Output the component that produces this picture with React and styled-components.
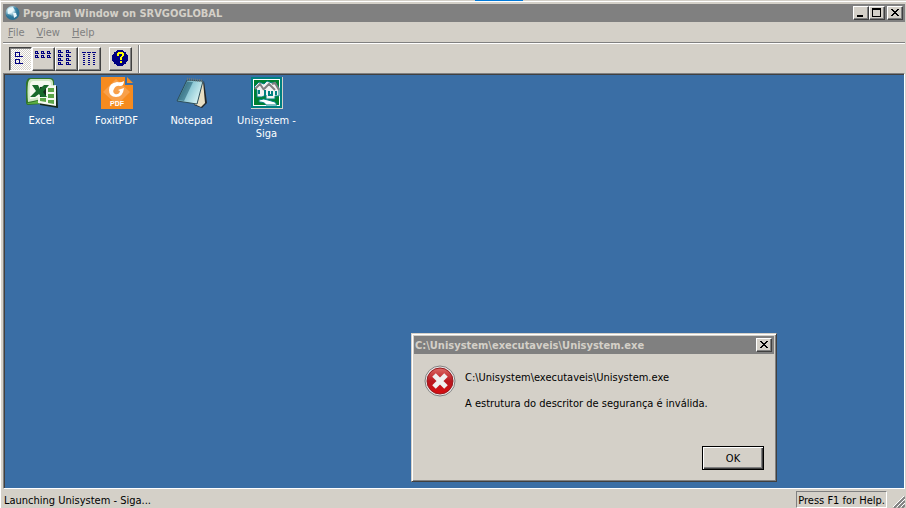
import React from "react";
import styled, { createGlobalStyle, css } from "styled-components";

const Global = createGlobalStyle`
  * { box-sizing: border-box; }
  html, body { margin: 0; background: #d4d0c8; }
  body, button { font: 11px/13px Tahoma, "DejaVu Sans Condensed", "DejaVu Sans", sans-serif; }
`;

const raised = css`
  border: 1px solid;
  border-color: #fff #404040 #404040 #fff;
  box-shadow: inset -1px -1px 0 #808080;
`;

const Window = styled.main`
  min-height: 100vh;
  display: flex;
  flex-direction: column;
  padding: 3px 1px 0 2px;
  background: #d4d0c8;
  border-left: 1px solid #fff;
  border-top: 1px solid #d4d0c8;
  box-shadow: inset 0 1px 0 #fff;
  color: #000;
  position: relative;
`;
const TopTab = styled.div`
  position: absolute;
  top: -1px;
  left: 474px;
  width: 48px;
  height: 1px;
  background: #0078d7;
`;
const TitleBar = styled.header`
  display: flex;
  align-items: center;
  height: 18px;
  padding: ${(p) => p.$pad};
  gap: 2px;
  background: #808080;
  color: #d4d0c8;
`;
const Title = styled.h1`
  flex: 1;
  margin: 0;
  font-size: 11px;
  line-height: 13px;
  font-weight: bold;
  white-space: nowrap;
`;
const Caption = styled.button`
  ${raised}
  width: 16px;
  height: 14px;
  padding: 0;
  display: flex;
  background: #d4d0c8;
`;
const CaptionGroup = styled.div`
  display: flex;
`;
const MenuBar = styled.nav`
  display: flex;
  height: 20px;
  align-items: center;
  gap: 12px;
  padding: 0 5px;
`;
const MenuItem = styled.button`
  border: 0;
  padding: 0;
  background: none;
  color: #808080;
  &::first-letter { text-decoration: underline; }
`;
const Toolbar = styled.div`
  display: flex;
  align-items: center;
  height: 31px;
  border-top: 1px solid #808080;
  box-shadow: inset 0 1px 0 #fff;
  padding: 2px 0 0 6px;
`;
const Tool = styled.button`
  ${raised}
  width: 23px;
  height: 24px;
  padding: 0;
  display: flex;
  background: #d4d0c8;
  ${(p) => p.$pressed && css`
    border-color: #404040 #fff #fff #404040;
    box-shadow: inset 1px 1px 0 #808080;
    background: repeating-conic-gradient(#fff 0 25%, #d4d0c8 0 50%) 0 0 / 2px 2px;
  `}
`;
const ToolGap = styled.span`
  width: 8px;
`;
const ToolEnd = styled.span`
  align-self: stretch;
  width: 2px;
  margin-left: 6px;
  border-left: 1px solid #808080;
  border-right: 1px solid #fff;
`;
const Desktop = styled.section`
  flex: 1;
  position: relative;
  border: 1px solid;
  border-color: #808080 #fff #fff #808080;
  box-shadow: inset 1px 1px 0 #404040;
  background: #3a6ea5;
`;
const Shortcuts = styled.div`
  display: flex;
  flex-wrap: wrap;
  padding: 3px 0;
`;
const Shortcut = styled.button`
  width: 75px;
  border: 0;
  padding: 0 8px;
  background: none;
  color: #fff;
  display: flex;
  flex-direction: column;
  align-items: center;
  gap: 5px;
`;
const Dialog = styled.div`
  position: absolute;
  right: 127px;
  bottom: 6px;
  width: 366px;
  padding: 2px;
  background: #d4d0c8;
  border: 1px solid;
  border-color: #d4d0c8 #404040 #404040 #d4d0c8;
  box-shadow: inset 1px 1px 0 #fff, inset -1px -1px 0 #808080;
`;
const DialogBody = styled.div`
  display: flex;
  gap: 9px;
  padding: 11px 10px 0;
`;
const Message = styled.div`
  padding-top: 6px;
  p { margin: 0 0 13px; white-space: nowrap; }
`;
const Actions = styled.div`
  display: flex;
  justify-content: flex-end;
  padding: 23px 10px 9px;
`;
const OkButton = styled.button`
  width: 62px;
  height: 24px;
  padding: 0;
  background: #d4d0c8;
  border: 1px solid #000;
  box-shadow: inset 1px 1px 0 #fff, inset -1px -1px 0 #404040, inset -2px -2px 0 #808080;
`;
const StatusBar = styled.footer`
  display: flex;
  justify-content: space-between;
  height: 19px;
  padding: 2px 0 0 1px;
`;
const StatusText = styled.span`
  padding-top: 3px;
`;
const StatusRight = styled.div`
  display: flex;
  align-items: flex-end;
  gap: 6px;
`;
const Help = styled.span`
  height: 17px;
  padding: 2px 1px;
  border: 1px solid;
  border-color: #808080 #fff #fff #808080;
  white-space: nowrap;
`;
const Svg = styled.svg`
  display: block;
  flex: none;
`;

const Pixels = ({ rows, color = "#000", w, h }) => (
  <Svg width={w} height={h} shapeRendering="crispEdges" fill={color} aria-hidden="true">
    {rows.map(([x, y, rw, rh = 1], i) => <rect key={i} x={x} y={y} width={rw} height={rh} />)}
  </Svg>
);
const CLOSE = [[3, 2, 2], [9, 2, 2], [4, 3, 2], [8, 3, 2], [5, 4, 4], [6, 5, 2], [5, 6, 4], [4, 7, 2], [8, 7, 2], [3, 8, 2], [9, 8, 2]];
const MIN = [[3, 8, 6, 2]];
const MAX = [[2, 1, 9, 2], [2, 3, 1, 7], [10, 3, 1, 7], [2, 9, 9]];

// A square outline whose bottom edge runs on to the right as a label line.
const box = (x, y, s, base) => [[x, y, s], [x, y, 1, s], [x + s - 1, y, 1, s], [x, y + s - 1, base]];
const LARGE = [...box(5, 4, 5, 8), ...box(5, 11, 5, 8)];
const SMALL = [2, 8, 14].flatMap((x) => [3, 7].flatMap((y) => box(x, y, 3, 4)));
const LIST = [2, 10].flatMap((x) => [2, 6, 10, 14].flatMap((y) => box(x, y, 3, 5)));
const DETAILS = [3, 8, 13].flatMap((x) => [[x, 4, 4], ...[6, 8, 10, 12, 14, 16].map((y) => [x + 1, y, 2])]);

const Globe = () => (
  <Svg width="16" height="16" viewBox="0 0 16 16" aria-hidden="true">
    <defs><radialGradient id="globe" cx=".38" cy=".3"><stop offset="0" stopColor="#fff" /><stop offset=".5" stopColor="#b4d9e6" /><stop offset="1" stopColor="#2c7294" /></radialGradient></defs>
    <circle cx="7.5" cy="8" r="7" fill="url(#globe)" />
    <path d="M8 2l4 1 2 4-3 1-1-3zM2 9l4 1 2 4-4-1z" fill="#2a789e" opacity=".75" />
    <path d="M3 4l5-2 1 3-3 3-3 1zM8 8l3 0 1 3-3 2z" fill="#e9f8fc" />
  </Svg>
);
const HelpMark = () => (
  <Svg width="21" height="22" viewBox="0 0 21 22" aria-hidden="true" shapeRendering="crispEdges">
    <circle cx="10" cy="10" r="8" fill="#000080" />
    <g fill="#ff0"><rect x="8" y="4" width="5" height="2" /><rect x="7" y="5" width="2" height="3" /><rect x="12" y="5" width="2" height="3" /><rect x="11" y="8" width="2" height="1" /><rect x="10" y="9" width="2" height="3" /><rect x="10" y="13" width="2" height="2" /></g>
  </Svg>
);
const ExcelIcon = () => (
  <Svg width="32" height="32" viewBox="0 0 32 32" aria-hidden="true">
    <path d="M4 1h20q4 0 4 4v21L2 28Q0 28 0 25V6q1-5 4-5z" fill="#2f7426" />
    <path d="M5 2h18q4 0 4 4v3Q23 22 2 25 1 14 2 6q1-4 3-4z" fill="#cfe8c5" />
    <path d="M7 4h15q3 0 3 3v4Q20 20 4 22 3 14 4 7q1-3 3-3z" fill="#f4faf0" />
    <path d="M1 26q18-1 26-17v17L2 27z" fill="#5fb143" />
    <path d="M14 10l17-1 1 22-18-3z" fill="#14281a" />
    <path d="M20 9l10-1v21l-18-3v-6h8z" fill="#f4f9ef" />
    <path d="M22 11h6v4h-6zM22 17h6v4h-6zM22 23h6v4l-6-1zM14 21h6v4l-6-1z" fill="#5aa547" />
    <path d="M6 8h6l2 4 4-4h5l-6 7 4 5h-6l-2-3-4 3H4l6-6z" fill="#176a2b" />
  </Svg>
);
const FoxitIcon = () => (
  <Svg width="32" height="32" viewBox="0 0 32 32" aria-hidden="true">
    <path d="M0 0h24v8h8v24H0z" fill="#f68b1f" /><path d="M26 0l6 6h-6z" fill="#f68b1f" />
    <path d="M15 2l14 13-13 13L2 15z" fill="#f8a04a" />
    <path d="M23 4q-3 2-7 1-8 1-8 8 0 7 7 7 7 0 8-9l-6 2 2 1q-1 4-5 3-3-2-1-5 2-4 6-3 4 0 4-5z" fill="#fff" />
    <text x="16" y="29" textAnchor="middle" fill="#fff" fontFamily="Liberation Sans" fontSize="7" fontWeight="bold">PDF</text>
  </Svg>
);
const NotepadIcon = () => (
  <Svg width="32" height="32" viewBox="0 0 32 32" aria-hidden="true">
    <defs><linearGradient id="page" x2="1" y2=".5"><stop stopColor="#1d5263" /><stop offset=".5" stopColor="#86c4d2" /><stop offset="1" stopColor="#d7f3f4" /></linearGradient></defs>
    <path d="M28 4l3 22-5 5-8-3z" fill="#24282a" /><path d="M27 4l2 22-4 4-7-3z" fill="#e8dfc4" />
    <path d="M11 3l16 1-6 23L1 24z" fill="url(#page)" stroke="#2c4d59" /><path d="M11 5L2 23l6 1 9-19z" fill="#164f66" opacity=".5" />
    <path d="M11 2l16 2" stroke="#6b777b" strokeWidth="3" strokeDasharray="1 1" />
  </Svg>
);
const SigaIcon = () => (
  <Svg width="32" height="32" viewBox="0 0 32 32" aria-hidden="true">
    <path d="M0 0h32v32H0z" fill="#d4d0c8" /><path d="M0 0h31v31H0z" fill="#008080" /><path d="M2 2h27v27H2z" fill="#fff" /><path d="M3 3h25v25H3z" fill="#008030" />
    <path d="M3 10l5-5 5 2 3-3 5 2 3-1 4 6v8h-4v3h-9v-4l-4 2H6v-7z" fill="#f2f2f2" stroke="#008080" />
    <path d="M4 12l5-5 4 6M13 12l5-5 6 6M21 7l3-1 4 7" fill="none" stroke="#808080" strokeWidth="2" />
    <path d="M14 13v6M18 14v4h3v-4M8 13v4M25 14v4" fill="none" stroke="#008080" strokeWidth="2" />
    <path d="M8 23q5-2 9 0l7 2 2 3H15q-1-3-7-3z" fill="#fff" stroke="#008080" />
  </Svg>
);
const ErrorIcon = () => (
  <Svg width="32" height="32" viewBox="0 0 32 32" aria-hidden="true">
    <defs><linearGradient id="err" x2="0" y2="1"><stop stopColor="#dd6a66" /><stop offset=".5" stopColor="#b81820" /><stop offset="1" stopColor="#d80c10" /></linearGradient></defs>
    <circle cx="16" cy="16" r="15" fill="#e9e9e9" stroke="#808080" /><circle cx="16" cy="16" r="13" fill="url(#err)" stroke="#971b1f" />
    <path d="M10 10l12 12M22 10L10 22" stroke="#f0f0f0" strokeWidth="5" />
  </Svg>
);
const Grip = () => (
  <Svg width="12" height="12" aria-hidden="true">
    <path d="M1 12L12 1M5 12l7-7M9 12l3-3" stroke="#808080" strokeWidth="2" />
    <path d="M0 11L11 0M4 11l8-8M8 11l4-4" stroke="#fff" />
  </Svg>
);

const SHORTCUTS = [["Excel", ExcelIcon], ["FoxitPDF", FoxitIcon], ["Notepad", NotepadIcon], ["Unisystem - Siga", SigaIcon]];
const TOOLS = [["Large icons", LARGE, true], ["Small icons", SMALL], ["List", LIST], ["Details", DETAILS]];

export default function App() {
  return (
    <Window>
      <Global />
      <TopTab />
      <TitleBar $pad="0 2px">
        <Globe />
        <Title>Program Window on SRVGOGLOBAL</Title>
        <CaptionGroup>
          <Caption aria-label="Minimize"><Pixels rows={MIN} w={14} h={12} /></Caption>
          <Caption aria-label="Maximize"><Pixels rows={MAX} w={14} h={12} /></Caption>
        </CaptionGroup>
        <Caption aria-label="Close"><Pixels rows={CLOSE} w={14} h={12} /></Caption>
      </TitleBar>
      <MenuBar>{["File", "View", "Help"].map((m) => <MenuItem key={m}>{m}</MenuItem>)}</MenuBar>
      <Toolbar>
        {TOOLS.map(([name, rows, pressed]) => (
          <Tool key={name} aria-label={name} $pressed={pressed}><Pixels rows={rows} color="#000080" w={21} h={22} /></Tool>
        ))}
        <ToolGap />
        <Tool aria-label="Help topics"><HelpMark /></Tool>
        <ToolEnd />
      </Toolbar>
      <Desktop>
        <Shortcuts>
          {SHORTCUTS.map(([name, Icon]) => <Shortcut key={name}><Icon />{name}</Shortcut>)}
        </Shortcuts>
        <Dialog role="dialog" aria-labelledby="dialog-title">
          <TitleBar $pad="0 2px 0 1px">
            <Title as="h2" id="dialog-title">C:\Unisystem\executaveis\Unisystem.exe</Title>
            <Caption aria-label="Close dialog"><Pixels rows={CLOSE} w={14} h={12} /></Caption>
          </TitleBar>
          <DialogBody>
            <ErrorIcon />
            <Message>
              <p>C:\Unisystem\executaveis\Unisystem.exe</p>
              <p>A estrutura do descritor de segurança é inválida.</p>
            </Message>
          </DialogBody>
          <Actions><OkButton>OK</OkButton></Actions>
        </Dialog>
      </Desktop>
      <StatusBar>
        <StatusText>Launching Unisystem - Siga...</StatusText>
        <StatusRight>
          <Help>Press F1 for Help.</Help>
          <Grip />
        </StatusRight>
      </StatusBar>
    </Window>
  );
}
